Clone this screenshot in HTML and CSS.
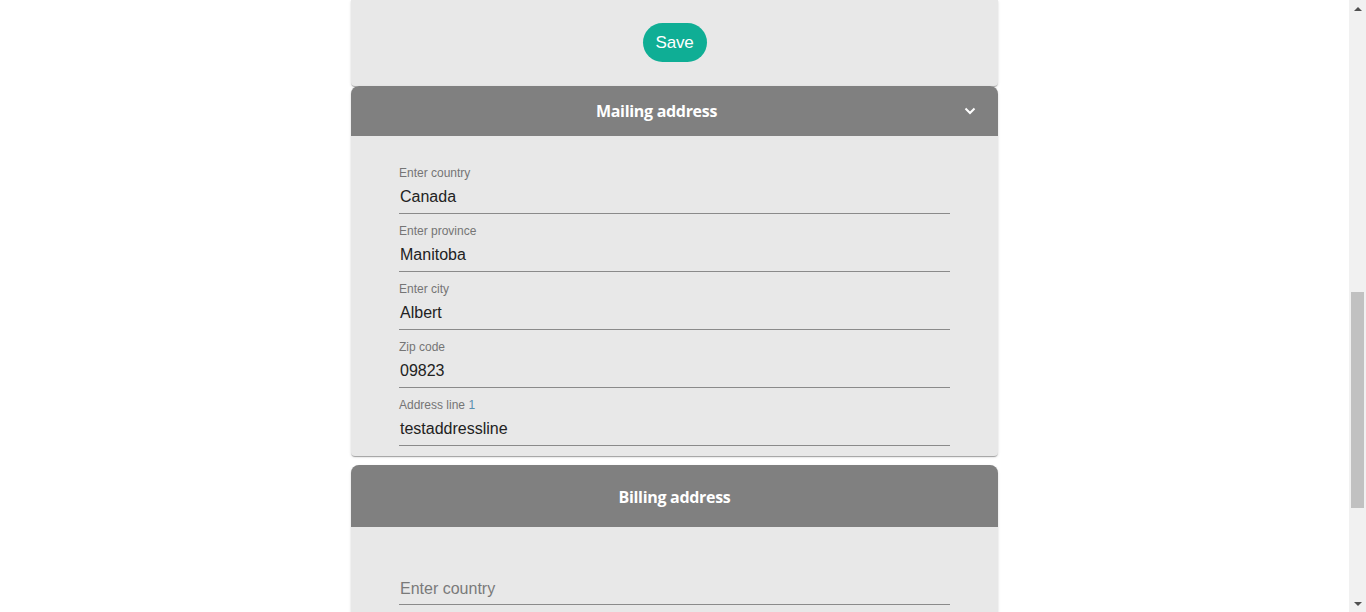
FILE: index.html
```html
<!DOCTYPE html>
<html>
<head>
<meta charset="utf-8">
<link rel="stylesheet" href="styles.css">
</head>
<body>
<div class="viewport">
  <main class="main">
    <div class="page">
      <section class="card top-card">
        <button class="save-btn">Save</button>
      </section>

      <section class="card accordion">
        <header class="acc-head">
          <span class="acc-title">Mailing address</span>
          <span class="chev-box">
            <svg class="chev" width="12" height="8" viewBox="0 0 12 8"><path d="M1.5 1.5 L6 6 L10.5 1.5" fill="none" stroke="#fff" stroke-width="2"/></svg>
          </span>
        </header>
        <div class="acc-body">
          <div class="field"><label class="lbl">Enter country</label><div class="val">Canada</div></div>
          <div class="field"><label class="lbl">Enter province</label><div class="val">Manitoba</div></div>
          <div class="field"><label class="lbl">Enter city</label><div class="val">Albert</div></div>
          <div class="field"><label class="lbl">Zip code</label><div class="val">09823</div></div>
          <div class="field"><label class="lbl">Address line <span class="num">1</span></label><div class="val">testaddressline</div></div>
        </div>
      </section>

      <section class="card accordion billing">
        <header class="acc-head tall">
          <span class="acc-title">Billing address</span>
        </header>
        <div class="acc-body billing-body">
          <div class="field empty"><div class="placeholder">Enter country</div></div>
        </div>
      </section>
    </div>
  </main>
  <aside class="scrollbar">
    <div class="arrow up"></div>
    <div class="track"><div class="thumb"></div></div>
    <div class="arrow down"></div>
  </aside>
</div>
</body>
</html>
```
FILE: styles.css
```css
* { box-sizing: border-box; }
html, body { margin: 0; padding: 0; background: #fff; }
body { font-family: "Liberation Sans", Arial, sans-serif; }

.viewport {
  display: flex;
  height: 612px;
  overflow: hidden;
}
.main {
  flex: 1;
  overflow: hidden;
}
.page {
  width: 647px;
  margin: 0 auto;
}
.card {
  background: #e8e8e8;
  box-shadow: 0 2px 1px -1px rgba(0,0,0,.2), 0 1px 1px 0 rgba(0,0,0,.14), 0 1px 3px 0 rgba(0,0,0,.12);
}
.top-card {
  height: 86px;
  border-radius: 0 0 4px 4px;
  display: flex;
  justify-content: center;
  padding-top: 23px;
}
.save-btn {
  width: 64px;
  height: 39px;
  border: none;
  border-radius: 20px;
  background: #0fae95;
  color: #fff;
  font-family: "Liberation Sans", Arial, sans-serif;
  font-size: 17px;
  letter-spacing: -0.2px;
  padding: 0;
}
.accordion {
  border-radius: 8px 8px 4px 4px;
}
.acc-head {
  height: 50px;
  background: #808080;
  border-radius: 8px 8px 0 0;
  display: flex;
  align-items: center;
}
.acc-head.tall { height: 62px; padding-top: 1px; }
.acc-title {
  flex: 1;
  text-align: center;
  color: #fff;
  font-family: "Open Sans", sans-serif;
  font-weight: 700;
  font-size: 16px;
  letter-spacing: -0.3px;
}
.chev-box {
  width: 36px;
  display: flex;
  justify-content: flex-start;
  padding-left: 2px;
}
.chev {
  display: block;
}
.acc-body {
  padding: 20px 48px 10px;
}
.field {
  border-bottom: 1px solid #8a8a8a;
  height: 58px;
  padding-top: 10px;
}
.lbl {
  display: block;
  font-size: 12px;
  color: #757575;
  line-height: 14px;
}
.num { color: #5a8fb0; }
.val {
  font-size: 16px;
  color: #222;
  margin-top: 7px;
  line-height: 19px;
  padding-left: 1px;
}
.accordion.billing { margin-top: 9px; }
.billing-body { padding-top: 40px; }
.field.empty {
  height: 38px;
  padding-top: 12px;
}
.placeholder {
  font-size: 16px;
  color: #7a7a7a;
  line-height: 19px;
  padding-left: 1px;
}

.scrollbar {
  width: 17px;
  background: #f1f1f1;
  display: flex;
  flex-direction: column;
}
.arrow {
  height: 17px;
  display: flex;
  align-items: center;
  justify-content: center;
}
.arrow::before {
  content: "";
  width: 0; height: 0;
  border-left: 4px solid transparent;
  border-right: 4px solid transparent;
}
.arrow.up::before { border-bottom: 4px solid #505050; }
.arrow.down::before { border-top: 4px solid #505050; }
.track {
  flex: 1;
  padding-top: 275px;
}
.thumb {
  margin: 0 2px;
  height: 216px;
  background: #c1c1c1;
}
```
